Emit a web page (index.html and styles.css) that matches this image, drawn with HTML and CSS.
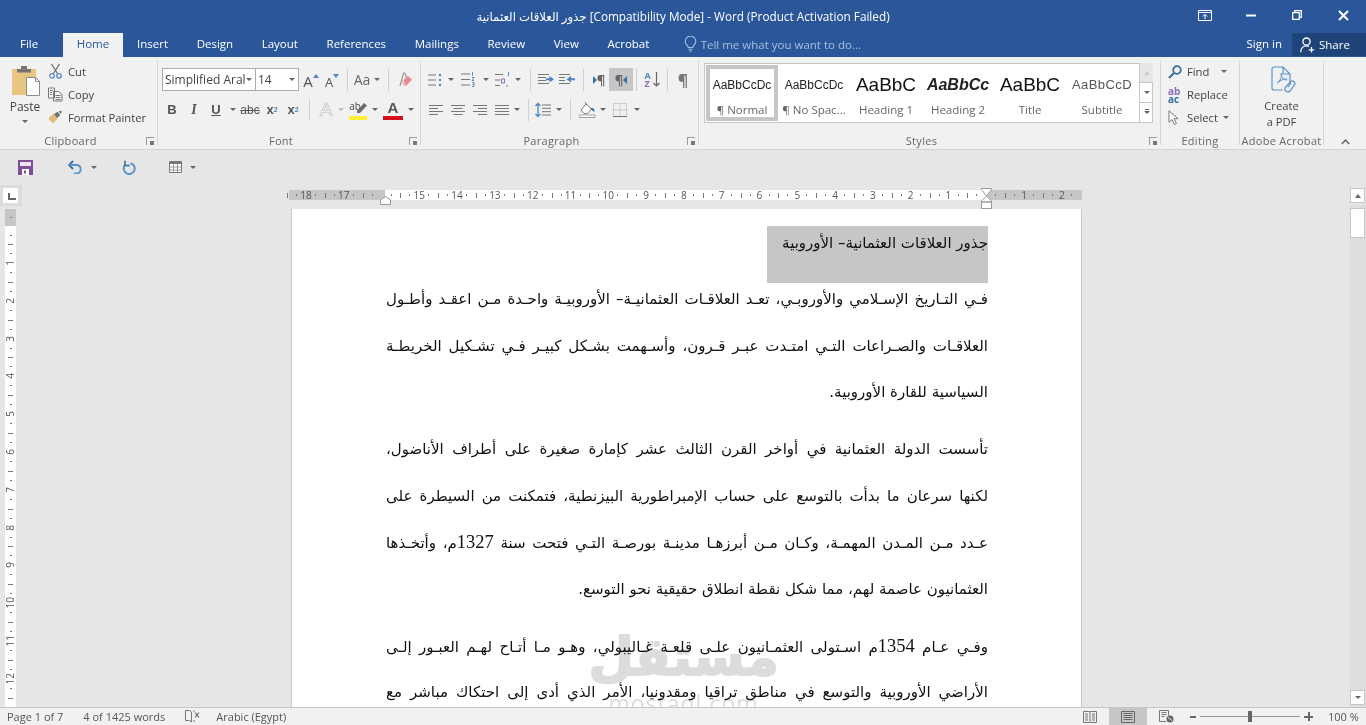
FILE: index.html
```html
<!DOCTYPE html>
<html>

<head>
    <meta charset="UTF-8">
    <title>Word</title>
    <link rel="stylesheet" href="styles.css">
</head>

<body>
    <header class="titlebar">
        <div></div>
        <div class="title">جذور العلاقات العثمانية [Compatibility Mode] - Word (Product Activation Failed)</div>
        <div class="winbtns">
            <span class="winbtn"><svg width="14" height="11" viewBox="0 0 14 11"><path d="M.5.500h13v10H.500zM.5 2.500h13M7 9V4.500M4.800 6.500 7 4.300l2.200 2.200" fill="none" stroke="#fff"/></svg></span>
            <span class="winbtn"><svg width="10" height="3" viewBox="0 0 10 3"><path d="M0 1.500h10" stroke="#fff" stroke-width="2"/></svg></span>
            <span class="winbtn"><svg width="10" height="10" viewBox="0 0 10 10"><path d="M.7 2.700h6.600v6.600H.7zM2.700 2.500V.7h6.600v6.600H7.500" fill="none" stroke="#fff" stroke-width="1.300"/></svg></span>
            <span class="winbtn"><svg width="11" height="11" viewBox="0 0 11 11"><path d="M1 1l9 9M10 1l-9 9" stroke="#fff" stroke-width="2"/></svg></span>
        </div>
    </header>

    <nav class="tabs">
        <a class="tab file">File</a>
        <a class="tab active">Home</a>
        <a class="tab">Insert</a>
        <a class="tab">Design</a>
        <a class="tab">Layout</a>
        <a class="tab">References</a>
        <a class="tab">Mailings</a>
        <a class="tab">Review</a>
        <a class="tab">View</a>
        <a class="tab">Acrobat</a>
        <div class="tellme">
            <svg width="13" height="16" viewBox="0 0 13 16"><path d="M4.300 11.500C4 9.500 1.200 8.300 1.200 5.400a5.300 5.300 0 0 1 10.600 0c0 2.900-2.800 4.100-3.100 6.100zM4.500 13.300h4M5.200 15h2.600" fill="none" stroke="#a9bfdc" stroke-width="1.100"/></svg>
            <span>Tell me what you want to do...</span>
        </div>
        <a class="signin">Sign in</a>
        <a class="share">
            <svg width="15" height="16" viewBox="0 0 15 16"><path d="M6.500 1a3.600 3.600 0 1 0 0 7.200 3.600 3.600 0 0 0 0-7.200zM.7 15.300c0-3.600 2.200-6.400 5.800-6.400 1 0 1.800.2 2.500.6M11.500 10v5.500M8.800 12.800h5.400" fill="none" stroke="#fff" stroke-width="1.300"/></svg>
            Share
        </a>
    </nav>

    <section class="ribbon">
        <div class="group clipboard">
            <div class="group-body clip-body">
                <div class="paste">
                    <svg width="30" height="32" viewBox="0 0 30 32"><path d="M1 5h24v26H1z" fill="#e9c582"/><path d="M6 5h14v3.500H6zM10 2h6v3h-6z" fill="#77736d"/><path d="M15.500 13.500h9l4 4v14h-13z" fill="#fff" stroke="#8c8c8c"/><path d="M24.500 13.500v4h4" fill="none" stroke="#8c8c8c"/></svg>
                    <span class="paste-label">Paste</span>
                    <span class="caret"></span>
                </div>
                <div class="clip-list">
                    <div class="clip-row"><svg width="15" height="16" viewBox="0 0 15 16"><path d="M3.500 1l6 9.500M11.500 1l-6 9.500" stroke="#6f6f6f" stroke-width="1.300"/><circle cx="4" cy="12.800" r="2.300" fill="none" stroke="#4b86c2" stroke-width="1.200"/><circle cx="11" cy="12.800" r="2.300" fill="none" stroke="#4b86c2" stroke-width="1.200"/></svg><span>Cut</span></div>
                    <div class="clip-row"><svg width="15" height="15" viewBox="0 0 15 15"><path d="M.5 1h6v10h-6zM5.500 4.500h5l3.500 3v6.500h-8.500z" fill="#f8f8f8" stroke="#777"/><path d="M2 3.500h3M2 5.500h2M2 7.500h2M7.500 8.500h5M7.500 10.500h5M7.500 12.500h5" stroke="#777"/></svg><span>Copy</span></div>
                    <div class="clip-row"><svg width="15" height="14" viewBox="0 0 16 14"><path d="M.5 8 6 3.500l4.500 4.500L6 13.500c-2-.5-4-2.500-5.500-5.500z" fill="#e4b878"/><path d="M6.500 4 10 1.500l3 3L10 8z" fill="#6d6d6d"/><path d="M11.500.5 15 1l-2 2.500z" fill="#555"/></svg><span>Format Painter</span></div>
                </div>
            </div>
            <div class="group-label launch"><span>Clipboard</span><i class="launcher"></i></div>
        </div>

        <div class="group font">
            <div class="group-body">
                <div class="row">
                    <div class="combo font-name">Simplified Aral<span class="caret"></span></div>
                    <div class="combo font-size">14<span class="caret"></span></div>
                    <span class="tb w22 grow-a big-a">A<svg width="6" height="4" viewBox="0 0 6 4"><path d="M0 4l3-4 3 4z" fill="#4b86c2"/></svg></span>
                    <span class="tb w20 grow-a small-a">A<svg width="6" height="4" viewBox="0 0 6 4"><path d="M0 0l3 4 3-4z" fill="#4b86c2"/></svg></span>
                    <i class="sep"></i>
                    <span class="tb w18 change-case">Aa</span>
                    <span class="tb w12"><i class="caret"></i></span>
                    <i class="sep"></i>
                    <span class="tb w22"><svg width="15" height="15" viewBox="0 0 15 15"><path d="M2 14 5.500 1h1.500l1.500 5" fill="none" stroke="#999" stroke-width="1.200"/><path d="M3.500 10 10 4l4 3.500-6 6.500H6z" fill="#e58a94"/><path d="M3.500 10l2.500 4h2L5.500 8z" fill="#f3c3c8"/></svg></span>
                </div>
                <div class="row">
                    <span class="tb w22 fmt bold">B</span>
                    <span class="tb w22 fmt ital">I</span>
                    <span class="tb w22 fmt under">U</span>
                    <span class="tb w12"><i class="caret"></i></span>
                    <span class="tb w22 fmt strike">abc</span>
                    <span class="tb w22 fmt bold">x<sub class="blue-sub">2</sub></span>
                    <span class="tb w20 fmt bold">x<sup class="blue-sub">2</sup></span>
                    <i class="sep sep-6"></i>
                    <span class="tb w20 effect">A</span>
                    <span class="tb w10"><i class="caret faint"></i></span>
                    <span class="tb w24 marker">
                        <span class="ab">ab</span>
                        <svg class="pen" width="11" height="11" viewBox="0 0 11 11"><path d="M0 9 7 1l3 2.500L3 11H0z" fill="#6d6d6d"/></svg>
                        <i class="swatch yellow"></i>
                    </span>
                    <span class="tb w10"><i class="caret"></i></span>
                    <span class="tb w26 marker">
                        <span class="color-a">A</span>
                        <i class="swatch red"></i>
                    </span>
                    <span class="tb w10"><i class="caret"></i></span>
                </div>
            </div>
            <div class="group-label launch"><span>Font</span><i class="launcher"></i></div>
        </div>

        <div class="group paragraph">
            <div class="group-body">
                <div class="row">
                    <span class="tb w16"><svg width="14" height="14" viewBox="0 0 14 14"><path d="M0 2h8M0 7h8M0 12h8" stroke="#777"/><path d="M11 1h2v2h-2zM11 6h2v2h-2zM11 11h2v2h-2z" fill="#4b86c2"/></svg></span>
                    <span class="tb w16"><i class="caret"></i></span>
                    <span class="tb w18"><svg width="14" height="15" viewBox="0 0 14 15"><path d="M0 2h9M0 7.500h9M0 13h9" stroke="#777"/><path d="M11.500 0v4M11 5.500h2l-2 3h2M11 10.500h2v4h-2M11.500 12.500h1.500" fill="none" stroke="#4b86c2" stroke-width=".9"/></svg></span>
                    <span class="tb w18"><i class="caret"></i></span>
                    <span class="tb w16"><svg width="16" height="15" viewBox="0 0 16 15"><path d="M0 2.500h8M0 8h5M0 13.500h5" stroke="#777"/><path d="M13.500 0v4" stroke="#4b86c2"/><path d="M6.500 7h3v4h-3zM12 13v2" fill="none" stroke="#8e6fb5"/></svg></span>
                    <span class="tb w14"><i class="caret"></i></span>
                    <i class="sep"></i>
                    <span class="tb w20"><svg width="16" height="11" viewBox="0 0 16 11"><path d="M0 .5h11M0 3.500h8M0 6.500h8M0 9.500h11" stroke="#777"/><path d="M8 4.200h3.500V2L16 5.300l-4.500 3.300V6.300H8z" fill="#4b86c2"/></svg></span>
                    <span class="tb w22"><svg width="16" height="11" viewBox="0 0 16 11"><path d="M0 .5h11M0 3.500h6M0 6.500h6M0 9.500h11" stroke="#777"/><path d="M16 4.200h-4V2L7.500 5.300l4.500 3.300V6.300h4z" fill="#4b86c2"/></svg></span>
                    <i class="sep"></i>
                    <span class="tb w20 pil"><svg width="4" height="8" viewBox="0 0 4 8"><path d="M0 0l4 4-4 4z" fill="#35709f"/></svg>¶</span>
                    <span class="tb w24 pil on">¶<svg width="4" height="8" viewBox="0 0 4 8"><path d="M4 0 0 4l4 4z" fill="#35709f"/></svg></span>
                    <i class="sep sep-3"></i>
                    <span class="tb w24 sort"><span class="az"><b>A</b><b class="purple">Z</b></span><svg width="7" height="15" viewBox="0 0 7 15"><path d="M3.500 0v14M.5 11l3 3 3-3" fill="none" stroke="#666" stroke-width="1.200"/></svg></span>
                    <i class="sep sep-3"></i>
                    <span class="tb w24 pilcrow">¶</span>
                </div>
                <div class="row para-row2">
                    <span class="tb w22"><svg width="14" height="10" viewBox="0 0 14 10"><path d="M0 .5h14M0 3.500h9M0 6.500h14M0 9.500h9" stroke="#777"/></svg></span>
                    <span class="tb w22"><svg width="14" height="10" viewBox="0 0 14 10"><path d="M0 .5h14M2.500 3.500h9M0 6.500h14M2.500 9.500h9" stroke="#777"/></svg></span>
                    <span class="tb w22"><svg width="14" height="10" viewBox="0 0 14 10"><path d="M0 .5h14M5 3.500h9M0 6.500h14M5 9.500h9" stroke="#777"/></svg></span>
                    <span class="tb w22"><svg width="14" height="10" viewBox="0 0 14 10"><path d="M0 .5h14M0 3.500h14M0 6.500h14M0 9.500h14" stroke="#777"/></svg></span>
                    <span class="tb w8"><i class="caret"></i></span>
                    <i class="sep sep-a"></i>
                    <span class="tb w26"><svg width="16" height="16" viewBox="0 0 16 16"><path d="M7 3h9M7 6.300h9M7 9.700h9M7 13h9" stroke="#777"/><path d="M3 1.500v13M.5 4 3 1.500 5.500 4M.5 12 3 14.500 5.500 12" fill="none" stroke="#4b86c2" stroke-width="1.300"/></svg></span>
                    <span class="tb w6"><i class="caret"></i></span>
                    <i class="sep sep-b"></i>
                    <span class="tb w26"><svg width="17" height="17" viewBox="0 0 17 17"><path d="M2 9l5-6 5.500 5-4 4.500H5z" fill="#fff" stroke="#777"/><path d="M6 1l2 3" stroke="#777"/><path d="M11 7l3 0c1 1 1.500 2 1.500 3s-1 1-1.500 0z" fill="#35709f"/><path d="M0 14h16v2.500H0z" fill="#fff" stroke="#888" stroke-width=".8"/></svg></span>
                    <span class="tb w6"><i class="caret"></i></span>
                    <span class="tb w28"><svg width="14" height="14" viewBox="0 0 14 14"><path d="M.5.500h13v13H.500zM7 .5v13M.5 7h13" fill="none" stroke="#aaa" stroke-dasharray="1 1"/><path d="M0 13.500h14" stroke="#777"/></svg></span>
                    <span class="tb w6"><i class="caret"></i></span>
                </div>
            </div>
            <div class="group-label launch"><span>Paragraph</span><i class="launcher"></i></div>
        </div>

        <div class="group styles">
            <div class="group-body">
                <div class="gallery">
                    <div class="style-item selected"><span class="preview normal">AaBbCcDc</span><span class="style-name">¶ Normal</span></div>
                    <div class="style-item"><span class="preview normal">AaBbCcDc</span><span class="style-name">¶ No Spac...</span></div>
                    <div class="style-item"><span class="preview h1">AaBbC</span><span class="style-name">Heading 1</span></div>
                    <div class="style-item"><span class="preview h2">AaBbCc</span><span class="style-name">Heading 2</span></div>
                    <div class="style-item"><span class="preview ttl">AaBbC</span><span class="style-name">Title</span></div>
                    <div class="style-item"><span class="preview sub">AaBbCcD</span><span class="style-name">Subtitle</span></div>
                    <div class="gallery-scroll">
                        <span class="gs disabled"><i class="caret up"></i></span>
                        <span class="gs"><i class="caret"></i></span>
                        <span class="gs more"><i class="caret"></i></span>
                    </div>
                </div>
            </div>
            <div class="group-label launch"><span>Styles</span><i class="launcher"></i></div>
        </div>

        <div class="group editing">
            <div class="group-body edit-list">
                <div class="edit-row"><svg width="14" height="14" viewBox="0 0 14 14"><circle cx="9" cy="5" r="3.800" fill="none" stroke="#35709f" stroke-width="1.800"/><path d="M6 8l-5 5" stroke="#35709f" stroke-width="2.200"/></svg><span>Find</span><i class="caret find-caret"></i></div>
                <div class="edit-row"><span class="abac"><b class="purple">ab</b><b class="blue">ac</b></span><span>Replace</span></div>
                <div class="edit-row"><svg width="14" height="15" viewBox="0 0 14 15"><path d="M1 .8v11.500l3-2.800 2.500 5 2-1-2.500-4.800h4z" fill="#fff" stroke="#777"/></svg><span>Select</span><i class="caret"></i></div>
            </div>
            <div class="group-label"><span>Editing</span></div>
        </div>

        <div class="group acrobat">
            <div class="group-body pdf">
                <svg width="26" height="29" viewBox="0 0 26 29"><path d="M1 3a2 2 0 0 1 2-2h9l7 7v9M19 8h-7V1M1 3v19a2 2 0 0 0 2 2h9" fill="none" stroke="#5b93cc" stroke-width="1.200"/><path d="M6 17c3-2 5-6 4.500-9-1-2-1 2 2 5 2 1.500 4 1 3.500 0-1-1-6 1-10 4z" fill="none" stroke="#5b93cc"/><path d="M14 22l6-7a3 3 0 0 1 4 3l-5 7a3 3 0 0 1-5-3zM17 21l3-4" fill="none" stroke="#5b93cc" stroke-width="1.200"/></svg>
                <span>Create</span>
                <span>a PDF</span>
            </div>
            <div class="group-label"><span>Adobe Acrobat</span></div>
        </div>

        <div class="collapse"><svg width="9" height="6" viewBox="0 0 9 6"><path d="M.8 5 4.500 1.200 8.200 5" fill="none" stroke="#666" stroke-width="1.500"/></svg></div>
    </section>

    <section class="qat">
        <svg class="q-save" width="15" height="15" viewBox="0 0 15 15"><path d="M0 0h15v15H0z" fill="#7e4f97"/><path d="M2 2h11v4H2z" fill="#ece4f0"/><path d="M4 9h7v6H4z" fill="#fff"/><path d="M6 10.500h2v3H6z" fill="#7e4f97"/></svg>
        <svg class="q-undo" width="15" height="14" viewBox="0 0 15 14"><path d="M5 1 1 5l4 4" fill="none" stroke="#35709f" stroke-width="1.800"/><path d="M1.500 5H9a4.300 4.300 0 0 1 0 8.500H6" fill="none" stroke="#5b93cc" stroke-width="1.800"/></svg>
        <i class="caret q-caret"></i>
        <svg class="q-redo" width="14" height="15" viewBox="0 0 14 15"><path d="M8.500 3.200A5.500 5.500 0 1 1 3 5" fill="none" stroke="#5b93cc" stroke-width="2"/><path d="M3 .8v4.700h4.700" fill="none" stroke="#35709f" stroke-width="1.600"/></svg>
        <svg class="q-table" width="13" height="12" viewBox="0 0 13 12"><path d="M.5.500h12v11H.500z" fill="#fff" stroke="#777"/><path d="M.5 2h12" stroke="#777" stroke-width="2"/><path d="M.5 6h12M.5 9h12M4.500 3v8M8.500 3v8" stroke="#999"/></svg>
        <i class="caret q-caret"></i>
    </section>

    <main class="workspace">
        <aside class="rail">
            <div class="tabstop"><i></i></div>
            <div class="vruler">
                <div class="v-margin"></div>
                <div class="v-lead"></div>
                <div class="v-cell"><span>1</span></div>
                <div class="v-cell"><span>2</span></div>
                <div class="v-cell"><span>3</span></div>
                <div class="v-cell"><span>4</span></div>
                <div class="v-cell"><span>5</span></div>
                <div class="v-cell"><span>6</span></div>
                <div class="v-cell"><span>7</span></div>
                <div class="v-cell"><span>8</span></div>
                <div class="v-cell"><span>9</span></div>
                <div class="v-cell"><span>10</span></div>
                <div class="v-cell"><span>11</span></div>
                <div class="v-cell"><span>12</span></div>
                <div class="v-cell"></div>
            </div>
        </aside>

        <div class="doc-area">
            <div class="hruler">
                <div class="h-cells">
                    <span class="h-cell">18</span><span class="h-cell">17</span><span class="h-cell"></span><span class="h-cell">15</span><span class="h-cell">14</span><span class="h-cell">13</span><span class="h-cell">12</span><span class="h-cell">11</span><span class="h-cell">10</span><span class="h-cell">9</span><span class="h-cell">8</span><span class="h-cell">7</span><span class="h-cell">6</span><span class="h-cell">5</span><span class="h-cell">4</span><span class="h-cell">3</span><span class="h-cell">2</span><span class="h-cell">1</span><span class="h-cell"></span><span class="h-cell">1</span><span class="h-cell">2</span>
                </div>
                <svg class="indent-left" width="11" height="9" viewBox="0 0 11 9"><path d="M.5 8.500V4l5-3.500 5 3.500v4.500z" fill="#fff" stroke="#999"/></svg>
                <svg class="indent-right" width="11" height="21" viewBox="0 0 11 21"><path d="M.5.500h10v1l-5 6.500-5-6.500zM5.500 8l5 5v1H.500v-1zM.5 14h10v6.500H.500z" fill="#fff" stroke="#999"/></svg>
            </div>

            <article class="page" dir="rtl">
                <h1 class="heading">جذور العلاقات العثمانية– الأوروبية</h1>
                <div class="para">
                    <div class="line just">فـي التـاريخ الإسـلامي والأوروبـي، تعـد العلاقـات العثمانيـة– الأوروبيـة واحـدة مـن اعقـد وأطـول</div>
                    <div class="line just">العلاقـات والصـراعات التـي امتـدت عبـر قـرون، وأسـهمت بشـكل كبيـر فـي تشـكيل الخريطـة</div>
                    <div class="line">السياسية للقارة الأوروبية.</div>
                </div>
                <div class="para">
                    <div class="line just">تأسست الدولة العثمانية في أواخر القرن الثالث عشر كإمارة صغيرة على أطراف الأناضول،</div>
                    <div class="line just">لكنها سرعان ما بدأت بالتوسع على حساب الإمبراطورية البيزنطية، فتمكنت من السيطرة على</div>
                    <div class="line just">عـدد مـن المـدن المهمـة، وكـان مـن أبرزهـا مدينـة بورصـة التـي فتحت سنة <span class="num">1327</span>م، وأتخـذها</div>
                    <div class="line">العثمانيون عاصمة لهم، مما شكل نقطة انطلاق حقيقية نحو التوسع.</div>
                </div>
                <div class="para">
                    <div class="line just">وفـي عـام <span class="num">1354</span>م اسـتولى العثمـانيون علـى قلعـة غـاليبولي، وهـو مـا أتـاح لهـم العبـور إلـى</div>
                    <div class="line just">الأراضي الأوروبية والتوسع في مناطق تراقيا ومقدونيا، الأمر الذي أدى إلى احتكاك مباشر مع</div>
                </div>
                <div class="watermark" dir="rtl">
                    <span class="wm-ar">مستقل</span>
                    <span class="wm-en" dir="ltr">mostaql.com</span>
                </div>
            </article>
        </div>

        <aside class="scrollbar">
            <span class="sb-btn"><i class="caret up"></i></span>
            <span class="sb-thumb"></span>
            <span class="sb-btn sb-down"><i class="caret"></i></span>
        </aside>
    </main>

    <footer class="statusbar">
        <span class="st-page">Page 1 of 7</span>
        <span class="st-words">4 of 1425 words</span>
        <svg class="st-book" width="15" height="13" viewBox="0 0 15 13"><path d="M.5.500h4l2 1.500v10l-2-1.500h-4zM8 1h1.500M8 11h2" fill="none" stroke="#777"/><path d="M10 2.500l4 5M14 2.500l-4 5" stroke="#666" stroke-width="1.200"/></svg>
        <span class="st-lang">Arabic (Egypt)</span>
        <div class="st-right">
            <span class="view-btn"><svg width="14" height="12" viewBox="0 0 14 12"><path d="M.5.500h6l.5.500.5-.5h6v11h-6l-.5.500-.5-.5h-6zM7 1v10M2 3h3M2 5h3M2 7h3M2 9h3M9 3h3M9 5h3M9 7h3M9 9h3" fill="none" stroke="#777"/></svg></span>
            <span class="view-btn on"><svg width="14" height="12" viewBox="0 0 14 12"><path d="M.5.500h13v11H.500zM2.500 2.500h9M2.500 4.500h9M2.500 6.500h9M2.500 8.500h9" fill="none" stroke="#666"/></svg></span>
            <span class="view-btn"><svg width="15" height="13" viewBox="0 0 15 13"><path d="M7 11.500H.5V.5h9v5M2.500 2.500h5M2.500 4.500h5M2.500 6.500h3" fill="none" stroke="#777"/><circle cx="11" cy="9" r="3.500" fill="#666"/><path d="M9 7.500l4 3" stroke="#eee"/></svg></span>
            <span class="zoom-minus"></span>
            <span class="slider"><i></i></span>
            <span class="zoom-plus"></span>
            <span class="st-zoom">100 %</span>
        </div>
    </footer>
</body>

</html>
```

FILE: styles.css
```css
* {
    box-sizing: border-box;
}

html, body {
    margin: 0;
    height: 725px;
    overflow: hidden;
}

body {
    display: flex;
    flex-direction: column;
    font-family: "Open Sans", "DejaVu Sans", sans-serif;
    font-size: 11.2px;
    color: #444;
    background-color: #e6e6e6;
}

i {
    font-style: normal;
}

/* title bar */
.titlebar {
    display: grid;
    grid-template-columns: 1fr auto 1fr;
    height: 33px;
    background-color: #2b579a;
    color: white;
}

.title {
    font-size: 11.75px;
    line-height: 33px;
    white-space: nowrap;
}

.winbtns {
    display: flex;
    justify-content: flex-end;
}

.winbtn {
    display: flex;
    align-items: center;
    justify-content: center;
    width: 46px;
    height: 30px;
}

/* tabs */
.tabs {
    display: flex;
    align-items: flex-start;
    height: 24px;
    padding-left: 5px;
    background-color: #2b579a;
    color: white;
    font-size: 11.5px;
}

.tab {
    height: 24px;
    padding: 0 14.3px;
    line-height: 22px;
}

.tab.file {
    padding: 0 25px 0 15px;
}

.tab.active {
    padding: 0 13.5px;
    background-color: #f1f1f1;
    color: #2b579a;
}

.tellme {
    display: flex;
    align-items: center;
    gap: 4px;
    height: 22px;
    margin-left: 20px;
    color: #a9bfdc;
}

.signin {
    margin-left: auto;
    height: 22px;
    line-height: 22px;
    margin-right: 10px;
}

.share {
    display: flex;
    align-items: center;
    gap: 4px;
    width: 74px;
    height: 23px;
    padding-left: 8px;
    background-color: #1f4479;
}

/* ribbon */
.ribbon {
    display: flex;
    height: 93px;
    padding-top: 4px;
    background-color: #f1f1f1;
    border-bottom: 1px solid #d4d4d4;
}

.group {
    display: flex;
    flex-direction: column;
    height: 84px;
    border-right: 1px solid #d5d5d5;
}

.group-body {
    flex: 1;
    min-height: 0;
}

.group-label {
    position: relative;
    height: 16px;
    line-height: 24px;
    text-align: center;
    font-size: 11px;
    color: #666;
    letter-spacing: 0.3px;
    white-space: nowrap;
}

.group-label.launch {
    padding-right: 16px;
}

.launcher {
    position: absolute;
    right: 3px;
    top: 8px;
    width: 8px;
    height: 8px;
    border-left: 1px solid #999;
    border-top: 1px solid #999;
}

.launcher::after {
    content: "";
    position: absolute;
    right: 0;
    bottom: 0;
    width: 4px;
    height: 4px;
    background-color: #777;
}

.clipboard { width: 158px; }
.font { width: 263px; }
.paragraph { width: 278px; }
.styles { width: 462px; }
.editing { width: 79px; }
.acrobat { width: 84px; }

.caret {
    display: inline-block;
    width: 0;
    height: 0;
    border-left: 3px solid transparent;
    border-right: 3px solid transparent;
    border-top: 3px solid #666;
}

.caret.up {
    border-top: 0;
    border-bottom: 4px solid #666;
}

.caret.faint {
    border-top-color: #bbb;
}

.sep {
    flex: none;
    width: 1px;
    height: 22px;
    margin: 0 5px;
    background-color: #d0d0d0;
}

.sep-3 { margin: 0 3px; }
.sep-6 { margin: 0 6px; }
.sep-a { margin: 0 1px 0 7px; }
.sep-b { margin: 0 3px 0 8px; }

/* clipboard */
.clip-body {
    display: flex;
}

.paste {
    display: flex;
    flex-direction: column;
    align-items: center;
    width: 50px;
    padding-top: 3px;
    font-size: 12px;
}

.paste svg {
    margin-left: 2px;
}

.paste-label {
    margin-top: 3px;
    line-height: 16px;
}

.paste .caret {
    margin-top: 5px;
}

.clip-list {
    display: flex;
    flex-direction: column;
    margin: -1.5px 0 0 -2px;
}

.clip-row {
    display: flex;
    align-items: center;
    height: 23.5px;
    gap: 5px;
    white-space: nowrap;
}

.clip-row svg {
    flex: none;
}

/* font and paragraph */
.row {
    display: flex;
    align-items: center;
    height: 23px;
    margin-top: 7px;
}

.row + .row {
    margin-top: 7px;
}

.font .row {
    padding-left: 4px;
}

.font .row + .row {
    padding-left: 3px;
}

.paragraph .row {
    padding-left: 6px;
}

.paragraph .para-row2 {
    padding-left: 4px;
}

.combo {
    display: flex;
    align-items: center;
    justify-content: space-between;
    height: 23px;
    padding: 0 3px 0 2px;
    background-color: white;
    border: 1px solid #ababab;
    font-size: 12px;
    white-space: nowrap;
}

.font-name { width: 94px; }
.font-size { width: 44px; margin-left: -1px; margin-right: 1px; }

.tb {
    position: relative;
    flex: none;
    display: flex;
    align-items: center;
    justify-content: center;
    height: 22px;
}

.w6 { width: 6px; }
.w8 { width: 8px; }
.w10 { width: 10px; }
.w12 { width: 12px; }
.w14 { width: 14px; }
.w16 { width: 16px; }
.w18 { width: 18px; }
.w20 { width: 20px; }
.w22 { width: 22px; }
.w24 { width: 24px; }
.w26 { width: 26px; }
.w28 { width: 28px; }

.grow-a {
    align-items: flex-end;
    color: #555;
}

.grow-a svg {
    margin-bottom: 13px;
}

.big-a { font-size: 15px; }
.small-a { font-size: 13px; }

.change-case {
    font-size: 14px;
    color: #666;
}

.fmt {
    font-family: "Liberation Sans", sans-serif;
    font-size: 13px;
    color: #555;
}

.bold { font-weight: bold; }

.ital {
    font-family: "Liberation Serif", serif;
    font-style: italic;
    font-weight: bold;
    font-size: 14px;
}

.under {
    text-decoration: underline;
    font-weight: bold;
}

.strike {
    text-decoration: line-through;
    font-size: 12px;
}

.blue-sub {
    font-size: 7px;
    color: #4b86c2;
}

.effect {
    font-family: "Liberation Sans", sans-serif;
    font-size: 19px;
    color: #fff;
    -webkit-text-stroke: 0.7px #bdbdbd;
}

.marker {
    align-items: flex-start;
}

.ab {
    font-size: 10px;
    line-height: 14px;
    margin-right: 6px;
}

.pen {
    position: absolute;
    right: 2px;
    top: 3px;
}

.swatch {
    position: absolute;
    left: 3px;
    right: 3px;
    bottom: 1px;
    height: 4px;
}

.yellow { background-color: #ffee33; }
.red { background-color: #d40f1c; }

.color-a {
    font-family: "Liberation Sans", sans-serif;
    font-weight: bold;
    font-size: 15px;
    line-height: 18px;
    color: #555;
}

.pil {
    font-size: 13px;
    font-weight: bold;
    color: #666;
}

.pil.on {
    height: 23px;
    background-color: #c6c6c6;
}

.sort {
    gap: 2px;
}

.az {
    display: flex;
    flex-direction: column;
    font-size: 9px;
    line-height: 8px;
    color: #4b86c2;
}

.purple { color: #8e6fb5; }
.blue { color: #35709f; }

.pilcrow {
    font-size: 16px;
    font-weight: bold;
    color: #777;
}

/* styles gallery */
.gallery {
    display: flex;
    height: 60px;
    width: 449px;
    margin: 2px 0 0 5px;
    padding: 1px 0 1px 1px;
    background-color: white;
    border: 1px solid #c6c6c6;
}

.style-item {
    display: flex;
    flex-direction: column;
    align-items: center;
    flex: none;
    width: 72px;
    height: 56px;
    padding: 0 4px;
    overflow: hidden;
    white-space: nowrap;
}

.style-item.selected {
    border: 4px solid #c6c6c6;
    padding: 0;
}

.preview {
    display: block;
    flex: none;
    height: 34px;
    width: 100%;
    overflow: hidden;
    text-align: center;
    font-family: "Liberation Sans", sans-serif;
    line-height: 40px;
    color: #222;
}

.selected .preview {
    height: 30px;
    line-height: 32px;
}

.normal { font-size: 12px; }
.h1 { font-size: 19px; color: #111; }
.h2 { font-size: 16px; font-style: italic; font-weight: bold; }
.ttl { font-size: 19px; color: #111; }
.sub { font-size: 13px; color: #555; letter-spacing: 0.4px; }

.style-name {
    font-size: 11.5px;
    line-height: 22px;
    color: #666;
}

.gallery-scroll {
    display: flex;
    flex-direction: column;
    width: 14px;
    margin: -2px -1px -2px auto;
    border-left: 1px solid #c6c6c6;
}

.gs {
    flex: 1;
    display: flex;
    align-items: center;
    justify-content: center;
    border-bottom: 1px solid #c6c6c6;
}

.gs.disabled {
    background-color: #e6e6e6;
}

.gs.disabled .caret {
    border-bottom-color: #ccc;
}

.gs.more .caret {
    box-shadow: 0 -3px 0 -1px #666;
}

/* editing */
.edit-list {
    display: flex;
    flex-direction: column;
    padding: 0 0 0 7px;
    margin-top: -1px;
}

.edit-row {
    display: flex;
    align-items: center;
    gap: 5px;
    height: 23.5px;
}

.edit-row svg {
    flex: none;
}

.abac {
    display: flex;
    flex-direction: column;
    width: 14px;
    font-size: 10px;
    line-height: 8px;
}

.find-caret {
    margin-left: 7px;
}

.pdf {
    display: flex;
    flex-direction: column;
    align-items: center;
    padding-top: 5px;
    line-height: 16px;
}

.pdf svg {
    flex: none;
    margin-bottom: 3px;
    margin-left: 5px;
}

.collapse {
    flex: 1;
    display: flex;
    justify-content: center;
    padding-top: 78px;
}

/* quick access toolbar */
.qat {
    display: flex;
    align-items: center;
    height: 30px;
    padding: 4px 0 0 18px;
    flex: none;
}

.q-undo { margin-left: 35px; }
.q-caret { margin-left: 8px; }
.q-redo { margin-left: 25px; }
.q-table { margin-left: 33px; }

/* workspace */
.workspace {
    flex: 1;
    display: flex;
    min-height: 0;
}

.rail {
    flex: none;
    width: 289px;
    padding-top: 5px;
}

.tabstop {
    width: 22px;
    height: 21px;
    padding: 3px;
    background-color: #dcdcdc;
}

.tabstop i {
    display: block;
    position: relative;
    width: 15px;
    height: 15px;
    background-color: white;
}

.tabstop i::after {
    content: "";
    position: absolute;
    left: 5px;
    top: 5px;
    width: 6px;
    height: 5px;
    border-left: 2px solid #666;
    border-bottom: 2px solid #666;
}

.vruler {
    width: 11px;
    height: 498px;
    margin: 3px 0 0 5px;
    overflow: hidden;
    background-color: white;
}

.v-margin {
    height: 17px;
    background: linear-gradient(#777, #777) 50% 8px / 2px 1px no-repeat #c6c6c6;
}

.v-lead {
    height: 18px;
    background: linear-gradient(#777, #777) 50% 9px / 2px 1px no-repeat;
}

.v-cell {
    display: flex;
    align-items: center;
    justify-content: center;
    height: 37.8px;
    font-size: 10px;
    color: #555;
    background:
        linear-gradient(#777, #777) 50% 0 / 5px 1px no-repeat,
        linear-gradient(#777, #777) 50% 9px / 2px 1px no-repeat,
        linear-gradient(#777, #777) 50% 28px / 2px 1px no-repeat;
}

.v-cell span {
    writing-mode: vertical-rl;
    transform: rotate(180deg);
    line-height: 11px;
}

.doc-area {
    flex: none;
    width: 793px;
    min-height: 0;
    display: flex;
    flex-direction: column;
}

.hruler {
    position: relative;
    flex: none;
    height: 10px;
    margin-top: 10px;
    margin-bottom: 9px;
    background: linear-gradient(to right, #c6c6c6 96px, white 96px, white 697px, #c6c6c6 697px);
}

.h-cells {
    display: flex;
    height: 10px;
    margin-left: -2px;
    overflow: hidden;
    width: 795px;
}

.h-cell {
    flex: none;
    width: 37.8px;
    height: 10px;
    line-height: 10px;
    text-align: center;
    font-size: 10px;
    color: #555;
    background:
        linear-gradient(#777, #777) 0 50% / 1px 5px no-repeat,
        linear-gradient(#777, #777) 9px 50% / 1px 2px no-repeat,
        linear-gradient(#777, #777) 28px 50% / 1px 2px no-repeat;
}

.indent-left {
    position: absolute;
    left: 91px;
    top: 6px;
}

.indent-right {
    position: absolute;
    left: 692px;
    top: -2px;
}

.page {
    position: relative;
    flex: 1;
    margin-left: 2px;
    padding: 17px 93px 0 94px;
    min-height: 0;
    overflow: hidden;
    background-color: white;
    border-left: 1px solid #c6c6c6;
    border-right: 1px solid #c6c6c6;
    font-family: "DejaVu Sans", sans-serif;
    font-size: 15px;
    color: #111;
}

.heading {
    width: 221px;
    height: 57px;
    margin: 0;
    padding-top: 6px;
    background-color: #c6c6c6;
    font-weight: normal;
    font-size: 15px;
    line-height: 22px;
    white-space: nowrap;
}

.para {
    display: flex;
    flex-direction: column;
    gap: 14.5px;
    margin-bottom: 25px;
}

.line {
    height: 32px;
    line-height: 32px;
}

.just {
    text-align: justify;
    text-align-last: justify;
}

.num {
    font-family: "Liberation Serif", serif;
    font-size: 18.5px;
}

.watermark {
    position: absolute;
    left: 309px;
    top: 416px;
    display: flex;
    flex-direction: column;
    align-items: center;
    width: 165px;
    color: #dcdcdc;
    mix-blend-mode: multiply;
    pointer-events: none;
}

.wm-ar {
    font-weight: bold;
    font-size: 52px;
    line-height: 64px;
    white-space: nowrap;
    -webkit-text-stroke: 2px #dcdcdc;
}

.wm-en {
    font-family: "Open Sans", sans-serif;
    font-size: 23px;
    line-height: 28px;
    letter-spacing: 1px;
}

/* scrollbar */
.scrollbar {
    position: relative;
    flex: 1;
    display: flex;
    flex-direction: column;
    align-items: flex-end;
    padding-top: 8px;
    background: linear-gradient(to right, transparent calc(100% - 16px), #dedede calc(100% - 16px)) 0 25px no-repeat;
}

.sb-btn {
    display: flex;
    align-items: center;
    justify-content: center;
    width: 15px;
    height: 15px;
    margin-right: 1px;
    background-color: white;
    border: 1px solid #c6c6c6;
}

.sb-thumb {
    width: 15px;
    height: 30px;
    margin: 5px 1px 0 0;
    background-color: white;
    border: 1px solid #c6c6c6;
}

.sb-down {
    margin-top: auto;
    margin-bottom: 2px;
}

/* status bar */
.statusbar {
    flex: none;
    display: flex;
    align-items: center;
    height: 18px;
    padding-left: 7px;
    background-color: #f1f1f1;
    border-top: 1px solid #c6c6c6;
    font-size: 11px;
    color: #555;
}

.st-words { margin-left: 20px; }
.st-book { margin-left: 20px; }
.st-lang { margin-left: 16px; }

.st-right {
    display: flex;
    align-items: center;
    height: 17px;
    margin-left: auto;
}

.view-btn {
    display: flex;
    align-items: center;
    justify-content: center;
    width: 38px;
    height: 17px;
}

.view-btn.on {
    background-color: #c6c6c6;
}

.zoom-minus, .zoom-plus {
    position: relative;
    width: 9px;
    height: 9px;
    background: linear-gradient(#666, #666) 50% 50% / 100% 2px no-repeat;
}

.zoom-minus {
    width: 6px;
    margin-left: 5px;
}

.zoom-plus {
    background:
        linear-gradient(#666, #666) 50% 50% / 100% 2px no-repeat,
        linear-gradient(#666, #666) 50% 50% / 2px 100% no-repeat;
}

.slider {
    position: relative;
    width: 100px;
    height: 1px;
    margin: 0 4px;
    background-color: #999;
}

.slider i {
    position: absolute;
    left: 48px;
    top: -5px;
    width: 4px;
    height: 11px;
    background-color: #666;
}

.st-zoom {
    width: 53px;
    padding-left: 15px;
}
```
